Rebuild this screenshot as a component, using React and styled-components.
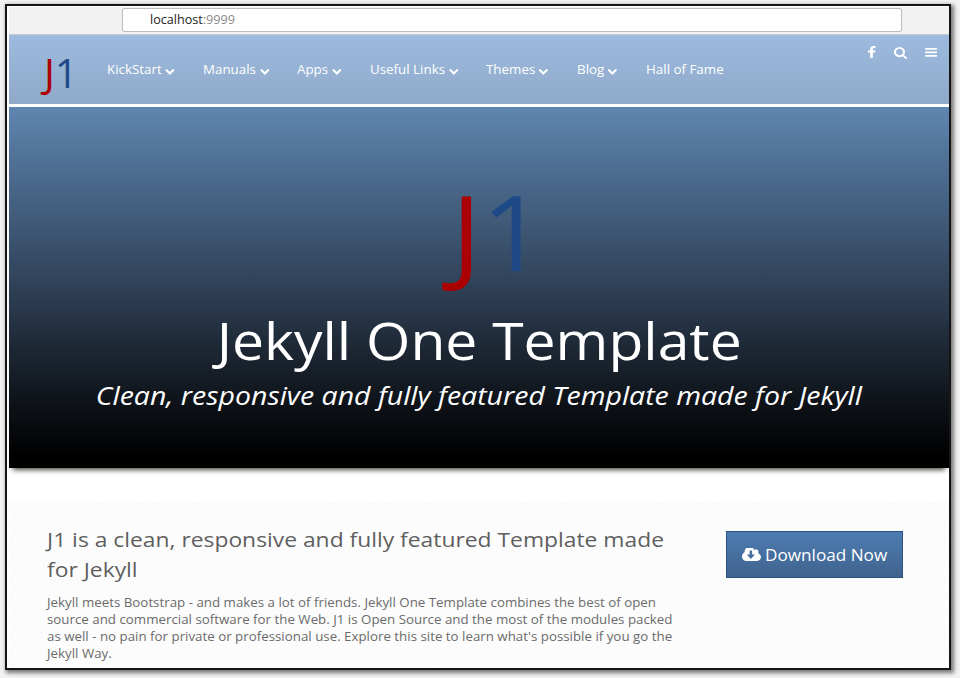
import React from "react";
import styled, { createGlobalStyle } from "styled-components";

const GlobalStyle = createGlobalStyle`
  *, *::before, *::after { box-sizing: border-box; }
  html, body { margin: 0; padding: 0; }
  body {
    width: 960px;
    height: 678px;
    overflow: hidden;
    background: #f2f2f2;
    font-family: "Open Sans", "Noto Sans", sans-serif;
  }
`;

const Window = styled.div`
  width: 946px;
  height: 666px;
  margin: 4px 0 0 5px;
  padding: 1px 0 0 2px;
  display: flex;
  flex-direction: column;
  background: #fff;
  border: 2px solid #151515;
  box-shadow: 2px 2px 4px 1px rgba(0, 0, 0, 0.5);
  overflow: hidden;
`;

const AddressBar = styled.div`
  flex: none;
  height: 28px;
  padding: 1px 47px 0 113px;
  background: #f2f2f2;
  border-bottom: 1px solid #c9c9cb;
`;

const AddressField = styled.div`
  height: 24px;
  padding-left: 27px;
  display: flex;
  align-items: center;
  background: #fff;
  border: 1px solid #bcbcbc;
  border-radius: 2px;
  font-size: 12px;
  line-height: 20px;
`;

/* Text drawn a little wider than its natural width. */
const Wide = styled.span`
  display: inline-block;
  white-space: nowrap;
  transform: scaleX(${(p) => p.$x || 1.1});
  transform-origin: ${(p) => p.$origin || "left"} center;
`;

const Host = styled.span`
  color: #222;
`;
const Port = styled.span`
  color: #8a8a8a;
`;

const NavBar = styled.header`
  flex: none;
  height: 69px;
  display: flex;
  background: linear-gradient(#9dbadf, #8fa9c8);
`;

const Brand = styled.div`
  width: 98px;
  padding: 10px 0 0 35px;
  font-size: 40px;
  line-height: 56px;
`;

const Letter = styled.span`
  color: ${(p) => p.$color};
`;

const Menu = styled.nav`
  flex: 1;
  display: flex;
  height: 70px;
  align-items: center;
`;

const MenuItem = styled.a`
  flex: none;
  width: ${(p) => p.$w}px;
  color: #fff;
  font-size: 12.15px;
  line-height: 20px;
`;

const Tools = styled.div`
  display: flex;
  align-items: flex-start;
  padding: 11px 12px 0 0;
`;

const Glyph = styled.svg`
  flex: none;
  display: inline-block;
  width: ${(p) => p.$w}px;
  height: ${(p) => p.$h}px;
  margin: ${(p) => p.$m || "0"};
  fill: #fff;
`;

const Hero = styled.section`
  flex: none;
  height: 361px;
  margin-top: 3px;
  display: flex;
  flex-direction: column;
  align-items: center;
  background: linear-gradient(#5f86b0 0%, #4d6c90 18%, #3c5470 36%, #2b3b4f 54%, #1a232e 70%, #090c10 87%, #000 97%);
  box-shadow: 0 6px 5px -4px rgba(30, 30, 20, 0.8);
  color: #fff;
`;

const HeroLogo = styled.div`
  height: 197px;
  padding: 52px 0 0 38px;
  font-size: 105px;
  line-height: 143px;
`;

const HeroTitle = styled.h1`
  margin: 0;
  font-size: 51.5px;
  font-weight: 400;
  line-height: 72px;
`;

const HeroLead = styled.p`
  margin: 0;
  font-size: 26px;
  font-style: italic;
  line-height: 38px;
`;

const Intro = styled.section`
  flex: 1;
  margin-top: 34px;
  padding: 22px 46px 0 38px;
  display: flex;
  justify-content: space-between;
  align-items: flex-start;
  background: repeating-linear-gradient(135deg, #fdfdfd 0 2px, #fbfbfb 2px 4px);
`;

const Copy = styled.div`
  color: #6b6b6b;
`;

const CopyTitle = styled.h2`
  margin: 0 0 10px;
  color: #5f5f5f;
  font-size: 20.8px;
  font-weight: 400;
  line-height: 30px;
`;

const CopyText = styled.p`
  margin: 0;
  font-size: 12.15px;
  line-height: 17px;
`;

const DownloadButton = styled.button`
  width: 177px;
  height: 47px;
  margin-top: 7px;
  padding: 0 0 0 15px;
  display: flex;
  align-items: center;
  gap: 4px;
  border: 1px solid #2c5284;
  background: linear-gradient(#4d7cb1, #40638e);
  color: #fff;
  font-family: inherit;
  font-size: 15.6px;
`;

const PATHS = {
  chevron:
    "M1683 808l-742 741q-19 19-45 19t-45-19l-742-741q-19-19-19-45.5t19-45.5l166-165q19-19 45-19t45 19l531 531 531-531q19-19 45-19t45 19l166 165q19 19 19 45.5t-19 45.5z",
  facebook:
    "M1343 12v264h-157q-86 0-116 36t-30 108v189h293l-39 296h-254v759h-306v-759h-255v-296h255v-218q0-186 104-288.5t277-102.5q147 0 228 12z",
  search:
    "M1216 832q0-185-131.5-316.5t-316.5-131.5-316.5 131.5-131.5 316.5 131.5 316.5 316.5 131.5 316.5-131.5 131.5-316.5zm512 832q0 52-38 90t-90 38q-54 0-90-38l-343-342q-179 124-399 124-143 0-273.5-55.5t-225-150-150-225-55.5-273.5 55.5-273.5 150-225 225-150 273.5-55.5 273.5 55.5 225 150 150 225 55.5 273.5q0 220-124 399l343 343q37 37 37 90z",
  cloud:
    "M1280 928q0-14-9-23t-23-9h-224v-352q0-13-9.5-22.5t-22.5-9.5h-192q-13 0-22.5 9.5t-9.5 22.5v352h-224q-13 0-22.5 9.5t-9.5 22.5q0 14 9 23l352 352q9 9 23 9t23-9l351-351q10-12 10-24zm640 224q0 159-112.5 271.5t-271.5 112.5h-1088q-185 0-316.5-131.5t-131.5-316.5q0-130 70-240t188-165q-2-30-2-43 0-212 150-362t362-150q156 0 285.5 87t188.5 231q71-62 166-62 106 0 181 75t75 181q0 76-41 138 130 31 213.5 135.5t83.5 238.5z",
};

const MENU = [
  { label: "KickStart", width: 96.3 },
  { label: "Manuals", width: 94.2 },
  { label: "Apps", width: 72.5 },
  { label: "Useful Links", width: 116.5 },
  { label: "Themes", width: 90.5 },
  { label: "Blog", width: 69 },
  { label: "Hall of Fame", width: 90, plain: true },
];

const TITLE_LINES = ["J1 is a clean, responsive and fully featured Template made", "for Jekyll"];
const TEXT_LINES = [
  "Jekyll meets Bootstrap - and makes a lot of friends. Jekyll One Template combines the best of open",
  "source and commercial software for the Web. J1 is Open Source and the most of the modules packed",
  "as well - no pain for private or professional use. Explore this site to learn what's possible if you go the",
  "Jekyll Way.",
];

function Logo({ stretch, origin }) {
  return (
    <Wide $x={stretch} $origin={origin}>
      <Letter $color="#ab0000">J</Letter>
      <Letter $color="#1d4a87">1</Letter>
    </Wide>
  );
}

export default function App() {
  return (
    <>
      <GlobalStyle />
      <Window>
        <AddressBar>
          <AddressField>
            <Wide $x={1.05}>
              <Host>localhost</Host>
              <Port>:9999</Port>
            </Wide>
          </AddressField>
        </AddressBar>
        <NavBar>
          <Brand>
            <Logo stretch={1.01} />
          </Brand>
          <Menu>
            {MENU.map((m) => (
              <MenuItem key={m.label} $w={m.width}>
                <Wide>
                  {m.label}
                  {!m.plain && (
                    <Glyph $w={8.3} $h={5.8} $m="0 0 -1px 3.6px" viewBox="90 533 1612 1035" preserveAspectRatio="none">
                      <path d={PATHS.chevron} />
                    </Glyph>
                  )}
                </Wide>
              </MenuItem>
            ))}
          </Menu>
          <Tools>
            <Glyph $w={7.5} $h={12} $m="0 18.5px 0 0" viewBox="479 0 864 1664" preserveAspectRatio="none">
              <path d={PATHS.facebook} />
            </Glyph>
            <Glyph $w={13} $h={12} $m="1px 18px 0 0" viewBox="64 128 1664 1664" preserveAspectRatio="none">
              <path d={PATHS.search} />
            </Glyph>
            <Glyph $w={12} $h={10} $m="2px 0 0 0" viewBox="0 0 12 10">
              <rect x="0" y="0.1" width="12" height="1.6" rx="0.4" />
              <rect x="0" y="3.6" width="12" height="1.6" rx="0.4" />
              <rect x="0" y="7.1" width="12" height="1.6" rx="0.4" />
            </Glyph>
          </Tools>
        </NavBar>
        <Hero>
          <HeroLogo>
            <Logo stretch={1.065} origin="center" />
          </HeroLogo>
          <HeroTitle>
            <Wide $x={1.107} $origin="center">Jekyll One Template</Wide>
          </HeroTitle>
          <HeroLead>
            <Wide $x={1.095} $origin="center">
              Clean, responsive and fully featured Template made for Jekyll
            </Wide>
          </HeroLead>
        </Hero>
        <Intro>
          <Copy>
            <CopyTitle>
              {TITLE_LINES.map((l) => (
                <div key={l}>
                  <Wide $x={1.098}>{l}</Wide>
                </div>
              ))}
            </CopyTitle>
            <CopyText>
              {TEXT_LINES.map((l) => (
                <React.Fragment key={l}>
                  <Wide $x={1.097}>{l}</Wide>
                  <br />
                </React.Fragment>
              ))}
            </CopyText>
          </Copy>
          <DownloadButton>
            <Glyph $w={19} $h={13} viewBox="0 256 1920 1280" preserveAspectRatio="none">
              <path d={PATHS.cloud} />
            </Glyph>
            <Wide>Download Now</Wide>
          </DownloadButton>
        </Intro>
      </Window>
    </>
  );
}
